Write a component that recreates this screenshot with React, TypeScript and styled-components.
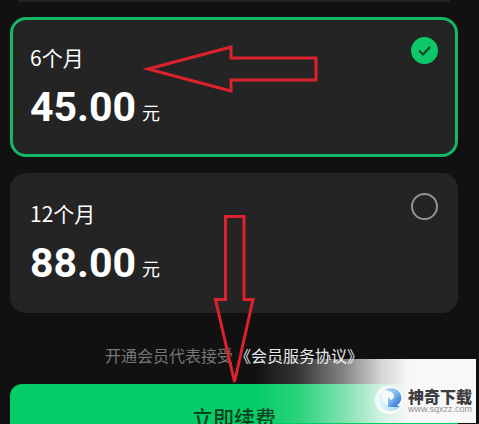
import React, { useState } from "react";
import styled, { createGlobalStyle } from "styled-components";

const GlobalStyle = createGlobalStyle`
  * { box-sizing: border-box; }
  body {
    margin: 0;
    background: #111111;
    color: #ffffff;
    font-family: "Noto Sans CJK SC", "Noto Sans", sans-serif;
  }
`;

const Page = styled.main`
  position: relative;
  height: 100vh;
  overflow: hidden;
  padding: 0 21px 0 10px;
`;

const PreviousPlan = styled.div`
  height: 2px;
  margin: 0 8px 15px;
  background: #232323;
`;

const PlanList = styled.div`
  display: grid;
  gap: 16px;
`;

const PlanCard = styled.label<{ $selected: boolean }>`
  display: flex;
  justify-content: space-between;
  align-items: flex-start;
  height: 140px;
  padding: 17px 17px 0;
  border: 3px solid ${(p) => (p.$selected ? "#14b866" : "#242424")};
  border-radius: 16px;
  background: #242424;
  cursor: pointer;
`;

const PlanText = styled.span`
  display: flex;
  flex-direction: column;
  padding-top: 5px;
`;

const Duration = styled.span`
  font-size: 21px;
  line-height: 30px;
`;

const Price = styled.span`
  display: flex;
  align-items: center;
  gap: 6px;
  margin-top: 11px;
`;

const Amount = styled.strong`
  font: 700 41px/48px Roboto, sans-serif;
`;

const Unit = styled.span`
  padding-top: 10px;
  font-size: 18px;
  line-height: 24px;
`;

const RadioBox = styled.span`
  display: grid;
  place-items: center;

  > * {
    grid-area: 1 / 1;
  }
`;

const Radio = styled.input`
  appearance: none;
  width: 27px;
  height: 27px;
  margin: 0;
  border: 2px solid #949494;
  border-radius: 50%;

  &:checked {
    border-color: #0cc868;
    background: #0cc868;
  }
`;

const Check = styled.svg`
  width: 27px;
  height: 27px;
  pointer-events: none;
`;

const Agreement = styled.p`
  display: flex;
  justify-content: center;
  gap: 2px;
  margin: 30px 0 17px;
  font-size: 16px;
  line-height: 24px;
  color: #777777;
  white-space: nowrap;
`;

const AgreementLink = styled.a`
  color: #e8e8e8;
  text-decoration: none;
`;

const RenewButton = styled.button`
  display: block;
  width: 100%;
  height: 66px;
  padding: 0;
  border: 0;
  border-radius: 12px;
  background: #04cc66;
  color: #073f20;
  font-family: inherit;
  font-size: 21px;
  font-weight: 500;
  line-height: 30px;
  cursor: pointer;
`;

const Arrows = styled.svg`
  position: absolute;
  top: 0;
  left: 0;
  pointer-events: none;
`;

const Watermark = styled.aside`
  position: absolute;
  right: 3px;
  bottom: 1px;
  display: flex;
  justify-content: flex-end;
  align-items: center;
  gap: 3px;
  width: 236px;
  height: 64px;
  padding: 18px 4px 0 0;
  background: linear-gradient(
    90deg,
    rgba(248, 248, 248, 0) 6%,
    rgba(248, 248, 248, 0.15) 24%,
    rgba(248, 248, 248, 0.5) 44%,
    rgba(248, 248, 248, 0.85) 60%,
    #f8f8f8 72%
  );
  pointer-events: none;
`;

const SiteName = styled.div`
  color: #3c3c40;
  font-size: 16px;
  font-weight: 900;
  line-height: 18px;
  white-space: nowrap;
`;

const SiteUrl = styled.div`
  color: #929292;
  font: 9px/9px "Liberation Sans", sans-serif;
`;

const plans = [
  { id: "m6", duration: "6个月", amount: "45.00" },
  { id: "m12", duration: "12个月", amount: "88.00" },
];

function SiteLogo() {
  return (
    <svg width="30" height="34" viewBox="0 0 30 34" aria-hidden="true">
      <defs>
        <linearGradient id="arc" x1="0" y1="0" x2="1" y2="1">
          <stop offset="0" stopColor="#c4ddf5" />
          <stop offset="0.5" stopColor="#7dbaf0" />
          <stop offset="1" stopColor="#1f5fd4" />
        </linearGradient>
        <linearGradient id="bowl" x1="0" y1="0" x2="1" y2="0">
          <stop offset="0" stopColor="#e9f5fc" />
          <stop offset="1" stopColor="#a3d9f7" />
        </linearGradient>
      </defs>
      <circle cx="14" cy="17" r="14" fill="#ffffff" opacity="0.75" />
      <path d="M5 10C1 18 5 28 15 28C20 28 24 26 26 22C21 25 13 24 9 19C7 16 7 12 8 9Z" fill="url(#bowl)" />
      <path
        d="M9 7C15 3 23 5 25.500 11C27.500 16 25.500 20 22 22L24 24H13V14L16 17C20 15 20 11 16 9C14 8 11 7 9 7Z"
        fill="url(#arc)"
      />
    </svg>
  );
}

export default function App() {
  const [selected, setSelected] = useState("m6");
  return (
    <>
      <GlobalStyle />
      <Page>
        <PreviousPlan />
        <PlanList role="radiogroup">
          {plans.map((plan) => (
            <PlanCard key={plan.id} $selected={selected === plan.id} htmlFor={plan.id}>
              <PlanText>
                <Duration>{plan.duration}</Duration>
                <Price>
                  <Amount>{plan.amount}</Amount>
                  <Unit>元</Unit>
                </Price>
              </PlanText>
              <RadioBox>
                <Radio
                  type="radio"
                  name="plan"
                  id={plan.id}
                  checked={selected === plan.id}
                  onChange={() => setSelected(plan.id)}
                />
                {selected === plan.id && (
                  <Check viewBox="0 0 27 27" aria-hidden="true">
                    <path d="M8 13.5L12 17.5L19 10" fill="none" stroke="#0b4526" strokeWidth="2" />
                  </Check>
                )}
              </RadioBox>
            </PlanCard>
          ))}
        </PlanList>
        <Agreement>
          <span>开通会员代表接受</span>
          <AgreementLink href="#agreement">《会员服务协议》</AgreementLink>
        </Agreement>
        <RenewButton type="button">立即续费</RenewButton>
        <Watermark>
          <SiteLogo />
          <div>
            <SiteName>神奇下载</SiteName>
            <SiteUrl>www.sqxzz.com</SiteUrl>
          </div>
        </Watermark>
        <Arrows width="330" height="390" viewBox="0 0 330 390" aria-hidden="true">
          <g fill="none" stroke="#dc222c" strokeWidth="3">
            <path d="M148 69L231 47V58H316V80H231V91Z" />
            <path d="M225.500 216.500H244V299.500H253L234.500 382L215.500 299.500H225.500Z" />
          </g>
        </Arrows>
      </Page>
    </>
  );
}
